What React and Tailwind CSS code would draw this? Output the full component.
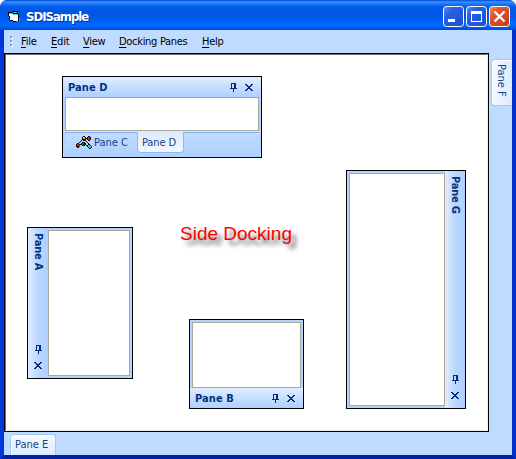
const Pin = () => (
  <svg width="7" height="9" viewBox="0 0 7 9" shapeRendering="crispEdges" fill="#002d7a" className="shrink-0">
    <path d="M1 0h5v1H1zM1 1h1v4H1zM4 1h2v4H4zM0 5h7v1H0zM3 6h1v3H3z" />
  </svg>
);

const Close = () => (
  <svg width="8" height="7" viewBox="0 0 8 7" shapeRendering="crispEdges" fill="#002d7a" className="shrink-0">
    <path d="M0 0h2v1H0zM6 0h2v1H6zM1 1h2v1H1zM5 1h2v1H5zM2 2h4v1H2zM3 3h2v1H3zM2 4h4v1H2zM1 5h2v1H1zM5 5h2v1H5zM0 6h2v1H0zM6 6h2v1H6z" />
  </svg>
);

const FormIcon = () => (
  <svg width="13" height="12" viewBox="0 0 13 12" shapeRendering="crispEdges" className="shrink-0">
    <path d="M0 1h5V0h5v3h1v7H8v1H5v-1H2V9H1V5H0z" fill="#000" />
    <path d="M1 3h4v1h5v6H5V9H2V5H1z" fill="#fff" />
    <path d="M1 2h4v1H1zM5 1h4v1H5zM5 3h5v1H5z" fill="#30d0d0" />
    <path d="M11 7h1v1h1v1h-1v1h-1z" fill="#777" />
  </svg>
);

const MoleculeIcon = () => (
  <svg width="16" height="14" viewBox="0 0 16 14" shapeRendering="crispEdges" className="shrink-0">
    <path d="M5 4h1v1H5zM4 5h1v1H4zM3 6h1v1H3zM9 2h3v1H9zM9 4h1v1H9zM10 5h1v1h-1zM11 6h1v1h-1zM12 7h1v2h-1zM4 8h2v1H4zM9 8h1v1H9zM10 9h2v1h-2z" fill="#111" />
    <path d="M6 1h1V0h2v1h1v3H9v1H7V4H6zM11 1h1V0h2v1h1v3h-1v1h-2V4h-1zM0 8h1V7h2v1h1v3H3v1H1v-1H0zM5 7h1V6h3v1h1v2H9v1H6V9H5zM11 9h1V8h2v1h1v1h1v2h-1v1h-2v-1h-1v-1h-1z" fill="#111" />
    <path d="M7 1h2v2H7z" fill="#e8d020" />
    <path d="M12 1h2v3h-2zM1 8h2v2H1zM3 9h1v2H3z" fill="#e01818" />
    <path d="M6 7h2v2H6z" fill="#187830" />
    <path d="M12 9h2v1h1v2h-2v-1h-1z" fill="#20d8e8" />
  </svg>
);

const Menu = ({ text, cls }) => (
  <span className={`block whitespace-nowrap ${cls}`}>
    <span className="underline underline-offset-2">{text[0]}</span>{text.slice(1)}
  </span>
);

const Body = ({ cls = "" }) => <div className={`min-h-0 min-w-0 border border-[#aca899] bg-white ${cls}`} />;

const SideHeader = ({ title, cls }) => (
  <div className={`flex shrink-0 flex-col items-center bg-linear-to-r from-[#e0edff] via-[#bbd7ff] to-[#aecfff] pt-[5px] pb-[9px] ${cls}`}>
    <span className="grow text-[11px] leading-[14px] font-bold tracking-[-0.2px] text-[#00337f] [writing-mode:vertical-rl]">{title}</span>
    <Pin />
    <span className="h-2" />
    <Close />
  </div>
);

export default function App() {
  return (
    <div className="flex h-[459px] w-[516px] flex-col overflow-hidden rounded-t-[7px] bg-[#0037dc] font-['DejaVu_Sans_Condensed','DejaVu_Sans',sans-serif] text-[11px]">
      <header className="flex h-[30px] shrink-0 items-center rounded-t-[7px] bg-[linear-gradient(to_bottom,#0046d5_0px,#3a93ff_2px,#1676fb_4px,#005ae8_7px,#0055e4_15px,#0065ff_23px,#0066ff_26px,#004ad0_30px)] pt-[3px] pr-1.5 pl-2">
        <FormIcon />
        <h1 className="mt-px ml-[5px] text-[13px] leading-4 font-bold tracking-[-1px] whitespace-nowrap text-white [text-shadow:1px_1px_0_#002898]">SDISample</h1>
        <div className="ml-auto flex gap-0.5">
          <svg width="21" height="21" viewBox="0 0 21 21">
            <rect x=".5" y=".5" width="20" height="20" rx="3" fill="url(#blue)" stroke="#fff" />
            <path d="M5 13h7v3H5z" fill="#fff" />
            <defs>
              <linearGradient id="blue" x1="0" y1="0" x2="1" y2="1">
                <stop offset="0" stopColor="#5f8ff2" /><stop offset=".3" stopColor="#2a60e4" /><stop offset="1" stopColor="#1c4fd0" />
              </linearGradient>
              <linearGradient id="red" x1="0" y1="0" x2="1" y2="1">
                <stop offset="0" stopColor="#f08a6c" /><stop offset=".3" stopColor="#e3552f" /><stop offset="1" stopColor="#c93a10" />
              </linearGradient>
            </defs>
          </svg>
          <svg width="21" height="21" viewBox="0 0 21 21">
            <rect x=".5" y=".5" width="20" height="20" rx="3" fill="url(#blue)" stroke="#fff" />
            <path d="M5 5h11v11H5zM6 8v7h9V8z" fill="#fff" fillRule="evenodd" />
          </svg>
          <svg width="21" height="21" viewBox="0 0 21 21">
            <rect x=".5" y=".5" width="20" height="20" rx="3" fill="url(#red)" stroke="#fff" />
            <path d="M5.5 5.5L15.5 15.5M15.5 5.5L5.5 15.5" stroke="#fff" strokeWidth="2.3" />
          </svg>
        </div>
      </header>

      <div className="flex min-h-0 grow flex-col border-x-4 border-t-0 border-b-4 border-[#0037dc] border-r-[#0030c8] border-b-[#0020a8] bg-[#bfdbff]">
        <nav className="flex h-[23px] shrink-0 items-center pt-0.5 pl-1.5 text-black">
          <svg width="4" height="12" viewBox="0 0 4 12" shapeRendering="crispEdges" className="mr-[7px] mb-0.5 shrink-0">
            <path d="M1 1h2v2H1zM1 5h2v2H1zM1 9h2v2H1z" fill="#fff" />
            <path d="M0 0h2v2H0zM0 4h2v2H0zM0 8h2v2H0z" fill="#6f9dd9" />
          </svg>
          <Menu text="File" cls="w-[30px] tracking-[-0.2px]" />
          <Menu text="Edit" cls="w-8 tracking-[-0.2px]" />
          <Menu text="View" cls="w-9 tracking-[-0.3px]" />
          <Menu text="Docking Panes" cls="w-[83px] tracking-[-0.3px]" />
          <Menu text="Help" cls="w-10 tracking-[-0.3px]" />
        </nav>

        <div className="flex min-h-0 grow">
          <main className="relative w-[485px] shrink-0 border border-black bg-white">
            <div className="absolute inset-0 border border-t-[#716f64] border-r-[#f1efe2] border-b-[#f1efe2] border-l-[#716f64]" />

            <section className="absolute top-[22px] left-[57px] flex h-[82px] w-[200px] flex-col border border-black bg-[#b5d3ff]">
              <div className="flex h-5 shrink-0 items-center bg-linear-to-b from-[#e0edff] to-[#aecfff] pr-2 pl-[5px]">
                <span className="grow pt-0.5 font-bold tracking-[0.1px] text-[#00337f]">Pane D</span>
                <Pin /><span className="w-2" /><Close />
              </div>
              <Body cls="mx-0.5 h-[34px] shrink-0" />
              <div className="mx-0.5 h-px shrink-0 bg-[#ece9d8]" />
              <div className="mx-0.5 flex min-h-0 grow items-start border-t border-[#80adf0] bg-linear-to-b from-[#bfdbff] to-[#aecfff] pl-[11px] text-[#15428b]">
                <div className="mt-[3px] flex w-[61px] items-center gap-0.5 leading-[14px] whitespace-nowrap">
                  <MoleculeIcon /><span>Pane C</span>
                </div>
                <div className="-mt-px h-[21px] w-[47px] rounded-b-[4px] border border-t-0 border-[#8db9f0] bg-linear-to-b from-[#deebfc] to-[#f3f8ff] pt-[4px] pl-1 leading-[14px] tracking-[-0.1px] whitespace-nowrap">Pane D</div>
              </div>
            </section>

            <section className="absolute top-[173px] left-[22px] flex h-[152px] w-[106px] border border-black bg-[#b5d3ff]">
              <SideHeader title="Pane A" cls="w-5" />
              <Body cls="my-0.5 mr-0.5 grow" />
            </section>

            <section className="absolute top-[265px] left-[184px] flex h-[90px] w-[115px] flex-col border border-black bg-[#b5d3ff]">
              <Body cls="mx-0.5 mt-0.5 grow" />
              <div className="flex h-5 shrink-0 items-center bg-linear-to-b from-[#e0edff] to-[#aecfff] pr-2 pl-[5px]">
                <span className="grow pt-0.5 font-bold tracking-[0.1px] text-[#00337f]">Pane B</span>
                <Pin /><span className="w-2" /><Close />
              </div>
            </section>

            <section className="absolute top-[116px] left-[341px] flex h-[239px] w-[120px] border border-black bg-[#b5d3ff]">
              <Body cls="my-0.5 ml-0.5 grow" />
              <SideHeader title="Pane G" cls="w-5" />
            </section>

            <p className="absolute top-[169px] left-[175px] font-['Liberation_Sans',Arial,sans-serif] text-[19px] leading-[22px] whitespace-nowrap text-[#ff0000] [text-shadow:5px_5px_4px_rgba(0,0,0,0.6)]">Side Docking</p>
          </main>

          <aside className="flex grow items-start justify-end pt-1.5">
            <div className="flex h-[47px] w-[21px] items-start justify-center rounded-l-[4px] border border-r-0 border-[#9cc9f5] bg-linear-to-r from-[#f5faff] to-[#dcebff] pt-1 pr-[3px] text-[#15428b] shadow-[inset_1px_1px_0_#fff]">
              <span className="leading-[14px] whitespace-nowrap [writing-mode:vertical-rl]">Pane F</span>
            </div>
          </aside>
        </div>

        <footer className="flex h-[23px] shrink-0 items-end pl-1.5">
          <div className="flex h-[21px] w-[46px] items-center rounded-t-[4px] border border-b-0 border-[#9cc9f5] bg-linear-to-b from-[#f5faff] to-[#dcebff] pl-1 whitespace-nowrap text-[#15428b] shadow-[inset_1px_1px_0_#fff]">Pane E</div>
        </footer>
      </div>
    </div>
  );
}
